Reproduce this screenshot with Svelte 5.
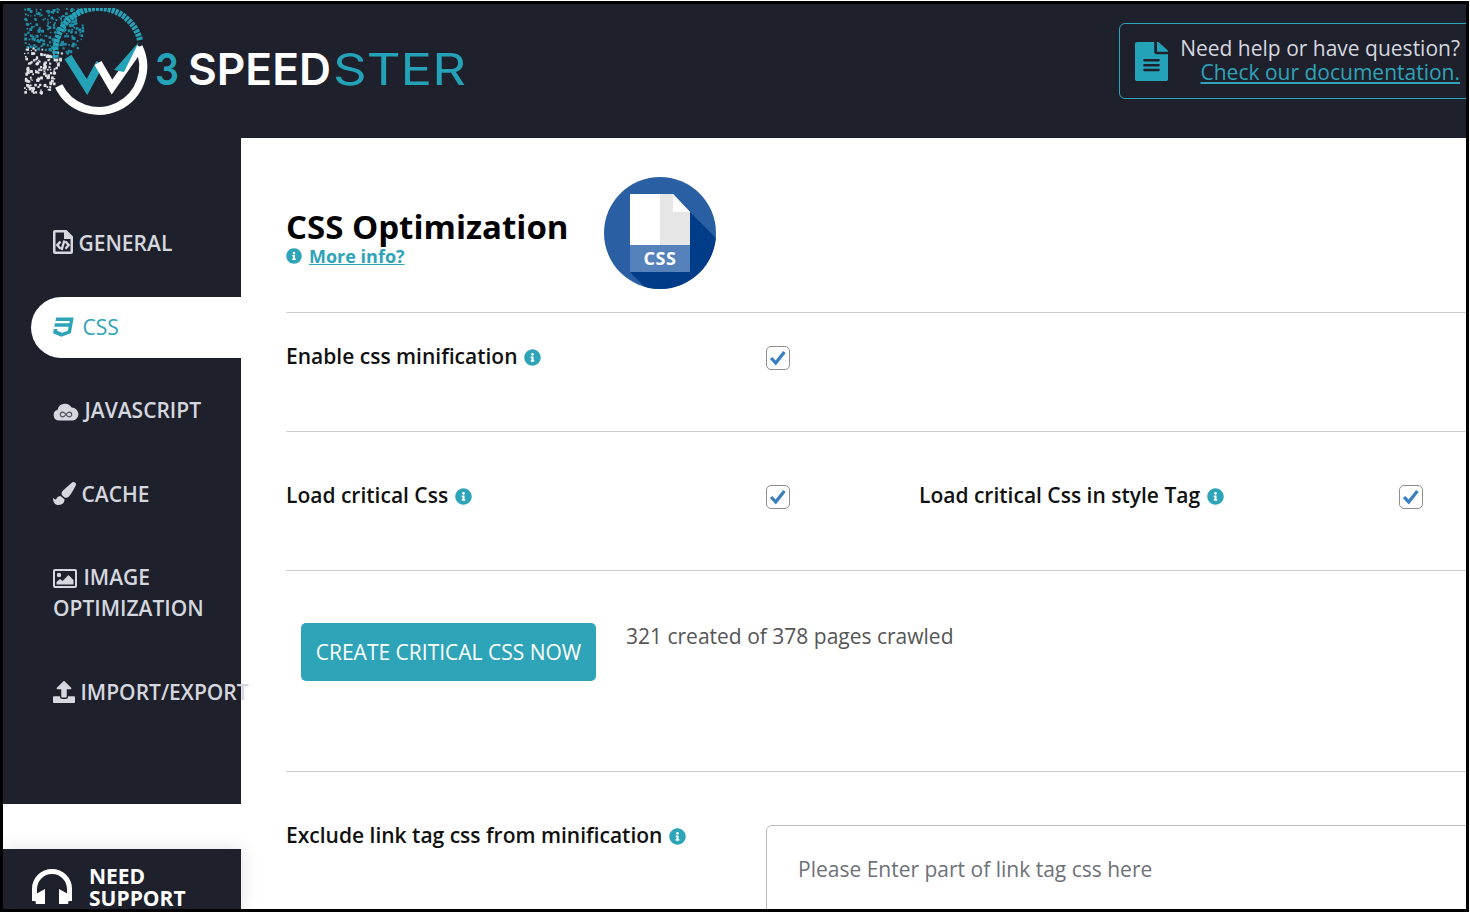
<script lang="ts">
	const INFO = 'M256 8C119.043 8 8 119.083 8 256c0 136.997 111.043 248 248 248s248-111.003 248-248C504 119.083 392.957 8 256 8zm0 110c23.196 0 42 18.804 42 42s-18.804 42-42 42-42-18.804-42-42 18.804-42 42-42zm56 254c0 6.627-5.373 12-12 12h-88c-6.627 0-12-5.373-12-12v-24c0-6.627 5.373-12 12-12h12v-64h-12c-6.627 0-12-5.373-12-12v-24c0-6.627 5.373-12 12-12h64c6.627 0 12 5.373 12 12v100h12c6.627 0 12 5.373 12 12v24z';

	const navItems = [
		{ id: 'general', label: 'GENERAL' },
		{ id: 'css', label: 'CSS', active: true },
		{ id: 'javascript', label: 'JAVASCRIPT' },
		{ id: 'cache', label: 'CACHE' },
		{ id: 'image', label: 'IMAGE OPTIMIZATION' },
		{ id: 'import', label: 'IMPORT/EXPORT' }
	];

	// speckles of the logo, dissolving to the left
	let seed = 7;
	function rnd() {
		seed = (seed * 16807) % 2147483647;
		return seed / 2147483647;
	}
	const specks: { x: number; y: number; s: number; c: string }[] = [];
	for (let i = 0; i < 520; i++) {
		const x = rnd() * 58;
		const y = rnd() * 86;
		const white = y > 38 + x * 0.15;
		if (!white && y + x * 0.9 > 88) continue;
		if (white && x > 26 + (86 - y) * 0.3) continue;
		specks.push({ x, y, s: 1.2 + rnd() * 1.8, c: white ? '#dfe3e6' : '#1f8fa3' });
	}
</script>

<div class="frame">
	<header class="topbar">
		<svg class="logo" viewBox="0 0 450 112" width="450" height="112" aria-label="W3 Speedster">
			<g class="specks">
				{#each specks as p}
					<rect x={p.x} y={p.y} width={p.s} height={p.s} fill={p.c} />
				{/each}
			</g>
			<path d="M32 50A43 43 0 0 1 116 32" fill="none" stroke="#24a3b8" stroke-width="6" stroke-dasharray="3 1" />
			<path d="M114.7 38.9A44.5 44.5 0 0 1 34.7 77.9" fill="none" stroke="#fff" stroke-width="8" />
			<path d="M44 49L63 79L76 55" fill="none" stroke="#24a3b8" stroke-width="8" />
			<path d="M74 55L88 79L116 39" fill="none" stroke="#fff" stroke-width="8" />
			<path d="M90 62L115 34L100 64Z" fill="#24a3b8" />
			<text x="131" y="77" class="logo-three" textLength="24" lengthAdjust="spacingAndGlyphs">3</text>
			<text x="164" y="77" class="logo-speed" textLength="143" lengthAdjust="spacingAndGlyphs">SPEED</text>
			<text x="309" y="77" class="logo-ster" textLength="133" lengthAdjust="spacingAndGlyphs">STER</text>
		</svg>
		<div class="help">
			<svg class="doc-icon" viewBox="0 0 384 512" width="33" height="39" preserveAspectRatio="none">
				<path fill="#24a3b8" d="M224 136V0H24C10.7 0 0 10.7 0 24v464c0 13.3 10.7 24 24 24h336c13.3 0 24-10.7 24-24V160H248c-13.2 0-24-10.8-24-24zm64 236c0 6.6-5.4 12-12 12H108c-6.6 0-12-5.4-12-12v-8c0-6.6 5.4-12 12-12h168c6.6 0 12 5.4 12 12v8zm0-64c0 6.6-5.4 12-12 12H108c-6.6 0-12-5.4-12-12v-8c0-6.6 5.4-12 12-12h168c6.6 0 12 5.4 12 12v8zm0-72v8c0 6.6-5.4 12-12 12H108c-6.6 0-12-5.4-12-12v-8c0-6.6 5.4-12 12-12h168c6.6 0 12 5.4 12 12zm96-114.1v6.1H256V0h6.1c6.4 0 12.5 2.5 17 7l97.9 98c4.5 4.5 7 10.6 7 16.9z" />
			</svg>
			<div class="help-text">
				<span>Need help or have question?</span>
				<a href="#docs">Check our documentation.</a>
			</div>
		</div>
	</header>

	<div class="body">
		<aside class="side">
			<nav class="nav">
				{#each navItems as item}
					<a href="#{item.id}" class="nav-item {item.id}" class:active={item.active}>
						{#if item.id === 'general'}
							<svg viewBox="0 0 20 24" width="20" height="24">
								<path fill="currentColor" fill-rule="evenodd" d="M2 0h11.5L20 6.5V22a2 2 0 0 1-2 2H2a2 2 0 0 1-2-2V2a2 2 0 0 1 2-2zm.5 2.5v19h15V9H11V2.5z" />
								<path fill="none" stroke="currentColor" stroke-width="2.4" d="M7.5 11.5l-3.2 3.6 3.2 3.6M12.5 11.5l3.2 3.6-3.2 3.6M11.4 10.5L8.6 20" />
							</svg>
						{:else if item.id === 'css'}
							<svg viewBox="0 0 512 512" width="22" height="22">
								<path fill="currentColor" d="M480 32l-64 368-223.3 80L0 400l19.6-94.8h82l-8 40.6L210 390.2l134.1-44.4 18.8-97.1H29.5l16-82h333.7l10.5-52.7H56.3l16.3-82H480z" />
							</svg>
						{:else if item.id === 'javascript'}
							<svg viewBox="0 0 26 18" width="26" height="18">
								<path fill="currentColor" d="M6 17.5a5.5 5.5 0 0 1-1.3-10.8A7.5 7.5 0 0 1 18.6 4.6 6.5 6.5 0 0 1 20 17.5z" />
								<path fill="none" stroke="#4a4d5a" stroke-width="1.1" d="M13 11.5c-1.4-2-2.2-2.4-3.3-2.4a2.4 2.4 0 0 0 0 4.8c1.1 0 1.9-.4 3.3-2.4s2.2-2.4 3.3-2.4a2.4 2.4 0 0 1 0 4.8c-1.1 0-1.9-.4-3.3-2.4z" />
							</svg>
						{:else if item.id === 'cache'}
							<svg viewBox="0 0 512 512" width="23" height="23">
								<path fill="currentColor" d="M167.02 309.34c-40.12 2.58-76.53 17.86-97.19 72.3-2.35 6.21-8 9.98-14.59 9.98-11.11 0-45.46-27.67-55.25-34.35C0 439.62 37.93 512 128 512c75.86 0 128-43.77 128-120.19 0-3.11-.65-6.08-.97-9.13l-88.01-73.34zM457.89 0c-15.16 0-29.37 6.71-40.21 16.45C213.27 199.05 192 203.34 192 257.09c0 13.7 3.25 26.76 8.73 38.7l63.82 53.18c7.21 1.8 14.64 3.03 22.39 3.03 62.11 0 98.11-45.47 211.16-256.46 7.38-14.35 13.9-29.85 13.9-45.99C512 20.64 486 0 457.89 0z" />
							</svg>
						{:else if item.id === 'image'}
							<svg viewBox="0 0 24 19" width="24" height="19">
								<path fill="currentColor" fill-rule="evenodd" d="M2 0h20a2 2 0 0 1 2 2v15a2 2 0 0 1-2 2H2a2 2 0 0 1-2-2V2a2 2 0 0 1 2-2zm0 2v15h20V2z" />
								<circle cx="6" cy="6" r="2.2" fill="currentColor" />
								<path fill="currentColor" d="M3.5 15.5v-2.5l3.5-3 2.5 2 6-6 5 5v4.5z" />
							</svg>
						{:else}
							<svg viewBox="0 0 512 512" width="22" height="22">
								<path fill="currentColor" d="M296 384h-80c-13.3 0-24-10.7-24-24V192h-87.7c-17.8 0-26.7-21.5-14.1-34.1L242.3 5.7c7.5-7.5 19.8-7.5 27.3 0l152.2 152.2c12.6 12.6 3.7 34.1-14.1 34.1H320v168c0 13.3-10.7 24-24 24zm216-8v112c0 13.3-10.7 24-24 24H24c-13.3 0-24-10.7-24-24V376c0-13.3 10.7-24 24-24h136v8c0 30.9 25.1 56 56 56h80c30.9 0 56-25.1 56-56v-8h136c13.3 0 24 10.7 24 24z" />
							</svg>
						{/if}
						{item.label}
					</a>
				{/each}
			</nav>
			<div class="support">
				<svg viewBox="0 0 42 36" width="42" height="36">
					<path fill="none" stroke="#fff" stroke-width="5" d="M3.5 33v-12a17.5 17.5 0 0 1 35 0v12" />
					<path fill="#fff" d="M3 27l11-6v15H5zM39 27l-11-6v15h9z" />
				</svg>
				<div class="support-text">NEED<br />SUPPORT</div>
			</div>
		</aside>

		<main class="content">
			<section class="title-row">
				<div>
					<h1>CSS Optimization</h1>
					<div class="more">
						<svg class="info" viewBox="0 0 512 512"><path fill="#2ea4b8" d={INFO} /></svg>
						<a href="#more">More info?</a>
					</div>
				</div>
				<svg class="css-badge" viewBox="0 0 112 112" width="112" height="112">
					<defs><clipPath id="disc"><circle cx="56" cy="56" r="56" /></clipPath></defs>
					<circle cx="56" cy="56" r="56" fill="#2a5fa3" />
					<path clip-path="url(#disc)" d="M86 35L140 89V140H70L26 95z" fill="#003c88" />
					<path d="M26 17H69L86 35V68H26z" fill="#fff" />
					<path d="M56 17H69V35H86V68H56z" fill="#e6e6e6" />
					<path d="M69 17L86 35H69z" fill="#fff" />
					<rect x="26" y="68" width="60" height="27" fill="#5682bb" />
					<text x="56" y="87.5" class="badge-text">CSS</text>
				</svg>
			</section>

			<section class="row row-one">
				<div class="label">Enable css minification <svg class="info" viewBox="0 0 512 512"><path fill="#2ea4b8" d={INFO} /></svg></div>
				<span class="check"><svg viewBox="0 0 24 24"><path d="M4.5 12l5 5.5L19 5.5" /></svg></span>
			</section>

			<section class="row row-two">
				<div class="label">Load critical Css <svg class="info" viewBox="0 0 512 512"><path fill="#2ea4b8" d={INFO} /></svg></div>
				<span class="check"><svg viewBox="0 0 24 24"><path d="M4.5 12l5 5.5L19 5.5" /></svg></span>
				<div class="label">Load critical Css in style Tag <svg class="info" viewBox="0 0 512 512"><path fill="#2ea4b8" d={INFO} /></svg></div>
				<span class="check"><svg viewBox="0 0 24 24"><path d="M4.5 12l5 5.5L19 5.5" /></svg></span>
			</section>

			<section class="row-action">
				<button class="create">CREATE CRITICAL CSS NOW</button>
				<p class="crawled">321 created of 378 pages crawled</p>
			</section>

			<section class="row-exclude">
				<div class="label">Exclude link tag css from minification <svg class="info" viewBox="0 0 512 512"><path fill="#2ea4b8" d={INFO} /></svg></div>
				<div class="fake-input">Please Enter part of link tag css here</div>
			</section>
		</main>
	</div>
</div>

<style>
	:global(body) {
		background: #fff;
		overflow: hidden;
	}

	.frame {
		box-sizing: border-box;
		width: 1469px;
		height: 911px;
		margin-top: 1px;
		border: 3px solid #000;
		overflow: hidden;
		display: flex;
		flex-direction: column;
		font-family: "Open Sans", "Noto Sans", sans-serif;
		background: #fff;
	}

	.topbar {
		flex: 0 0 134px;
		background: #1e202c;
		display: flex;
		justify-content: space-between;
		padding: 0 0 0 21px;
		position: relative;
	}

	.logo {
		margin-top: 4px;
		flex: none;
	}

	.specks {
		filter: blur(0.5px);
	}

	.logo-three, .logo-speed, .logo-ster {
		font-family: Inter, sans-serif;
		font-size: 44px;
	}

	.logo-three { fill: #24a3b8; font-weight: 600; }
	.logo-speed { fill: #fff; font-weight: 600; }
	.logo-ster { fill: #24a3b8; font-weight: 400; }

	.help {
		box-sizing: border-box;
		width: 360px;
		height: 76px;
		margin-top: 19px;
		margin-right: -13px;
		padding: 0 0 0 15px;
		border: 1px solid #2ea4b8;
		border-radius: 6px;
		display: flex;
		align-items: center;
		gap: 11px;
		flex: none;
	}

	.help-text {
		width: 281px;
		margin-top: -2px;
		display: flex;
		flex-direction: column;
		align-items: flex-end;
		font-size: 21px;
		line-height: 24px;
		color: #d5d7df;
		white-space: nowrap;
	}

	.help-text a {
		color: #2ea4b8;
	}

	.body {
		flex: 1;
		display: flex;
		min-height: 0;
	}

	.side {
		flex: 0 0 238px;
		min-width: 0;
		display: flex;
		flex-direction: column;
	}

	.nav {
		flex: 0 0 666px;
		box-sizing: border-box;
		background: #1e202c;
		padding: 75px 0 0 28px;
		display: flex;
		flex-direction: column;
		gap: 22.5px;
	}

	.nav-item {
		padding: 15px 0 15px 22px;
		border-radius: 31px 0 0 31px;
		font-size: 21px;
		font-weight: 600;
		line-height: 31px;
		color: #d5d7df;
		text-decoration: none;
		position: relative;
		z-index: 1;
		white-space: nowrap;
	}

	.nav-item.image {
		width: 160px;
		white-space: normal;
	}

	.nav-item svg {
		vertical-align: -3px;
	}

	.nav-item.css svg {
		margin-right: 2px;
	}

	.nav-item.image svg {
		margin-right: 1px;
	}

	.nav-item.active {
		background: #fff;
		color: #2ea4b8;
		font-weight: 500;
	}

	.support {
		margin-top: 45px;
		flex: 1;
		background: #1e202c;
		display: flex;
		align-items: flex-start;
		gap: 16px;
		padding: 16px 0 0 28px;
		box-shadow: 0 0 18px rgba(0, 0, 0, 0.12);
	}

	.support svg {
		margin-top: 3px;
	}

	.support-text {
		color: #fff;
		font-size: 21px;
		font-weight: 700;
		line-height: 22px;
	}

	.content {
		flex: 1;
		min-width: 0;
		padding-left: 45px;
		color: #111;
	}

	.title-row {
		box-sizing: border-box;
		height: 175px;
		padding-top: 39px;
		display: flex;
		gap: 35px;
		border-bottom: 1px solid #ccc;
	}

	.title-row > div {
		padding-top: 30px;
	}

	h1 {
		margin: 0;
		font-size: 33px;
		font-weight: 700;
		line-height: 39px;
		color: #000;
	}

	.more {
		display: flex;
		align-items: center;
		gap: 7px;
		font-size: 18px;
		font-weight: 700;
		line-height: 20px;
	}

	.more a {
		color: #2ea4b8;
	}

	.info {
		width: 17px;
		height: 17px;
		vertical-align: -2px;
		margin-left: 1px;
	}

	.more .info {
		margin-left: 0;
		width: 16px;
		height: 16px;
	}

	.badge-text {
		font-family: "Open Sans", sans-serif;
		font-size: 18px;
		font-weight: 700;
		letter-spacing: 0.5px;
		fill: #fff;
		text-anchor: middle;
	}

	.row {
		box-sizing: border-box;
		display: grid;
		grid-template-columns: 480px 153px 480px 24px;
		border-bottom: 1px solid #ccc;
		align-items: start;
	}

	.row-one {
		height: 119px;
		padding-top: 30px;
	}

	.row-two {
		height: 139px;
		padding-top: 50px;
	}

	.label {
		font-size: 21px;
		line-height: 26px;
		font-weight: 600;
		color: #111;
	}

	.check {
		box-sizing: border-box;
		width: 24px;
		height: 24px;
		margin-top: 3px;
		border: 1px solid #8e8e8e;
		border-radius: 5px;
		display: block;
		background: #fff;
	}

	.check svg {
		display: block;
		width: 22px;
		height: 22px;
	}

	.check path {
		fill: none;
		stroke: #3a7fc1;
		stroke-width: 3.6;
	}

	.row-action {
		box-sizing: border-box;
		height: 201px;
		padding: 52px 0 0 15px;
		display: flex;
		align-items: flex-start;
		gap: 30px;
		border-bottom: 1px solid #ccc;
	}

	.create {
		width: 295px;
		height: 58px;
		padding: 0;
		border: none;
		border-radius: 5px;
		background: #2ea4b8;
		color: #fff;
		font-family: inherit;
		font-size: 21px;
		line-height: 58px;
	}

	.crawled {
		margin: 0;
		font-size: 21px;
		line-height: 26px;
		color: #555;
	}

	.row-exclude {
		display: flex;
		padding-top: 50px;
		position: relative;
	}

	.row-exclude .label {
		flex: 0 0 480px;
	}

	.fake-input {
		box-sizing: border-box;
		flex: 1;
		height: 100px;
		margin-top: 3px;
		margin-right: -10px;
		padding: 28px 0 0 31px;
		border: 1px solid #bbb;
		border-radius: 6px;
		font-size: 21px;
		line-height: 30px;
		color: #6d7178;
	}
</style>
